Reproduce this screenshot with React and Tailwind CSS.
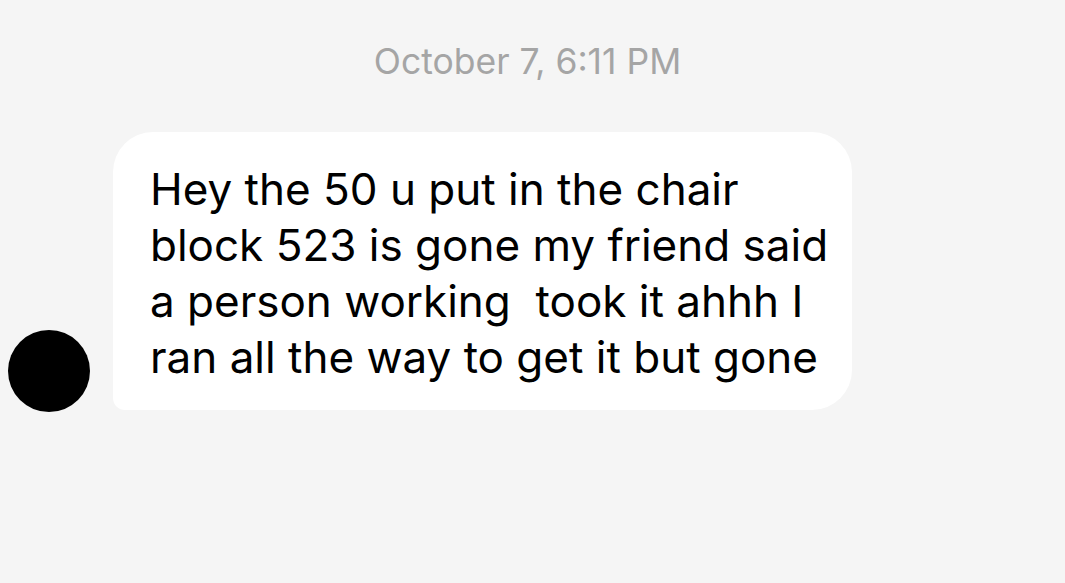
export default function App() {
  const lines = [
    'Hey the 50 u put in the chair',
    'block 523 is gone my friend said',
    'a person working  took it ahhh I',
    'ran all the way to get it but gone',
  ];

  return (
    <div className="w-[1065px] h-[583px] bg-[#f5f5f5] overflow-hidden font-['Inter','Liberation_Sans',sans-serif]">
      <div className="pt-[42px] pr-[10px] h-[132px] text-center text-[35.5px] leading-[40px] text-[#a5a5a5]">
        October 7, 6:11 PM
      </div>
      <div className="flex items-end">
        <div className="ml-2 mb-[-2px] w-[82px] h-[82px] rounded-full bg-black shrink-0" />
        <div className="ml-[23px] w-[739px] h-[278px] bg-white rounded-[40px] rounded-bl-[12px] pl-[37px] pt-[29px] text-[44px] leading-[56px] text-black">
          {lines.map((line, i) => (
            <div key={i} className="whitespace-pre">
              {line}
            </div>
          ))}
        </div>
      </div>
    </div>
  );
}
